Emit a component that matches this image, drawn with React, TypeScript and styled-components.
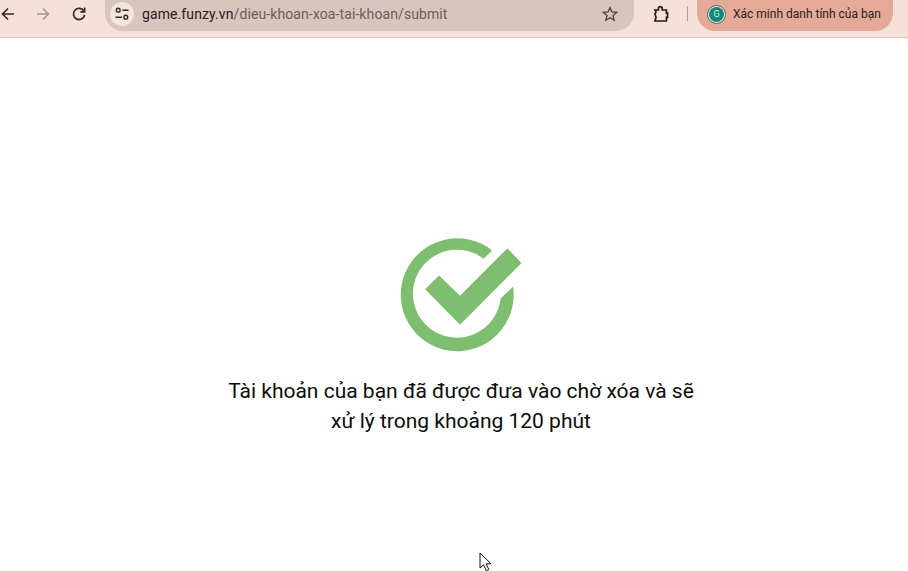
import React from "react";
import styled, { createGlobalStyle } from "styled-components";

const GlobalStyle = createGlobalStyle`
  html, body {
    margin: 0;
    padding: 0;
    background: #fff;
    overflow: hidden;
  }
`;

export default function App() {
  return (
    <>
      <GlobalStyle />
      <Page>
        <Toolbar>
          <NavButton>
            <svg width="16" height="16" viewBox="0 0 16 16" fill="none" stroke="#2f2a28" strokeWidth="1.6">
              <path d="M14 8H2.5M8 2.5 2.5 8 8 13.5" />
            </svg>
          </NavButton>
          <NavButton>
            <svg width="16" height="16" viewBox="0 0 16 16" fill="none" stroke="#a3948f" strokeWidth="1.5">
              <path d="M2 8h11.5M8 2.5 13.5 8 8 13.5" />
            </svg>
          </NavButton>
          <NavButton>
            <svg width="16" height="16" viewBox="0 0 16 16" fill="none" stroke="#2f2a28" strokeWidth="1.7">
              <path d="M13 5.2A5.6 5.6 0 1 0 13.6 9" />
              <path d="M13.6 1.6v4.2H9.4" />
            </svg>
          </NavButton>
          <Omnibox>
            <SiteInfo>
              <svg width="16" height="16" viewBox="0 0 16 16" fill="none" stroke="#2f2a28" strokeWidth="1.4">
                <circle cx="4.2" cy="4.2" r="1.9" />
                <path d="M8.5 4.2h6M1.5 11.2h6.5" />
                <circle cx="11.8" cy="11.2" r="1.9" />
              </svg>
            </SiteInfo>
            <Url>
              <Host>game.funzy.vn</Host>/dieu-khoan-xoa-tai-khoan/submit
            </Url>
            <StarIcon width="16" height="16" viewBox="0 0 16 16" fill="none" stroke="#4a4240" strokeWidth="1.3">
              <path d="M8 1.6 9.9 6l4.7.4-3.6 3.1 1.1 4.7L8 11.7l-4.1 2.5L5 9.5 1.4 6.4 6.1 6z" />
            </StarIcon>
          </Omnibox>
          <ExtensionIcon width="18" height="18" viewBox="0 0 18 18" fill="none" stroke="#1f1b1a" strokeWidth="1.7">
            <path d="M3 5h3.4V3.6a1.9 1.9 0 0 1 3.8 0V5h4.2v3.2h1.2v4.2h-1.2V16H3l1-3.6-1-3.6 1-1.9z" />
          </ExtensionIcon>
          <Divider />
          <ProfilePill>
            <Avatar>
              <AvatarInner>G</AvatarInner>
            </Avatar>
            <ProfileText>Xác minh danh tính của bạn</ProfileText>
          </ProfilePill>
        </Toolbar>
        <Main>
          <SuccessIcon viewBox="0 0 420 405" aria-hidden="true">
            <path
              fill="#7dbf6e"
              d="M305 78A167 167 0 1 0 367 185L330 220A130 130 0 1 1 280 103Z"
            />
            <path fill="#7dbf6e" d="M107 193 148 152 210 212 350 72 392 115 210 298Z" />
          </SuccessIcon>
          <Message>
            Tài khoản của bạn đã được đưa vào chờ xóa và sẽ
            <br />
            xử lý trong khoảng 120 phút
          </Message>
        </Main>
        <Cursor width="14" height="20" viewBox="0 0 14 20">
          <path
            d="M1 1v15l3.6-3.2 2.6 6 2.6-1.1-2.6-5.9h4.8z"
            fill="#fff"
            stroke="#111"
            strokeWidth="1"
          />
        </Cursor>
      </Page>
    </>
  );
}

const Page = styled.div`
  position: relative;
  width: 908px;
  height: 571px;
  overflow: hidden;
  background: #fff;
  font-family: Roboto, "Liberation Sans", sans-serif;
`;

const Toolbar = styled.div`
  display: flex;
  align-items: center;
  box-sizing: border-box;
  height: 38px;
  padding: 0 15px 10px 0;
  background: #f6e0d8;
  border-bottom: 1px solid #cfc3bd;
  overflow: hidden;
`;

const NavButton = styled.div`
  display: flex;
  flex: none;
  align-items: center;
  justify-content: center;
  width: 36px;
  height: 16px;

  &:first-child {
    width: 16px;
    margin-right: 9px;
  }
`;

const Omnibox = styled.div`
  display: flex;
  align-items: center;
  flex: none;
  box-sizing: border-box;
  width: 529px;
  height: 36px;
  margin: -5px 0 -4px 8px;
  padding: 2px 16px 0 5px;
  border-radius: 0 0 18px 18px;
  background: #d8c5bd;
`;

const SiteInfo = styled.div`
  display: flex;
  align-items: center;
  justify-content: center;
  flex: none;
  width: 24px;
  height: 24px;
  border-radius: 50%;
  background: #f4e4de;
`;

const Url = styled.div`
  flex: 1;
  margin-left: 8px;
  font-size: 14px;
  letter-spacing: 0.1px;
  color: #6a5f5b;
  white-space: nowrap;
`;

const Host = styled.span`
  color: #26211f;
`;

const StarIcon = styled.svg`
  flex: none;
`;

const ExtensionIcon = styled.svg`
  flex: none;
  margin-left: 18px;
`;

const Divider = styled.div`
  flex: none;
  width: 1px;
  height: 15px;
  margin-left: 17px;
  background: #d98d7b;
`;

const ProfilePill = styled.div`
  display: flex;
  align-items: center;
  flex: none;
  box-sizing: border-box;
  width: 196px;
  height: 36px;
  margin: -5px 0 -4px 9px;
  padding: 2px 0 0 10px;
  border-radius: 0 0 18px 18px;
  background: #e5a998;
`;

const Avatar = styled.div`
  display: flex;
  align-items: center;
  justify-content: center;
  flex: none;
  box-sizing: border-box;
  width: 19px;
  height: 19px;
  border: 1px solid #5c6e5e;
  border-radius: 50%;
  background: #efe1da;
`;

const AvatarInner = styled.div`
  width: 15px;
  height: 15px;
  border-radius: 50%;
  background: #0f8a78;
  color: #d8f0e8;
  font-size: 9px;
  line-height: 15px;
  text-align: center;
`;

const ProfileText = styled.div`
  margin-left: 7px;
  font-size: 12px;
  color: #2a1f1c;
  white-space: nowrap;
`;

const Main = styled.main`
  display: flex;
  flex-direction: column;
  align-items: center;
  padding: 186px 0 0 14px;
`;

const SuccessIcon = styled.svg`
  display: block;
  width: 142px;
  height: 137px;
  margin-left: -3px;
`;

const Message = styled.p`
  margin: 15px 0 0;
  font-size: 21px;
  line-height: 30px;
  text-align: center;
  color: #0c0c0c;
`;

const Cursor = styled.svg`
  position: absolute;
  left: 479px;
  top: 552px;
`;
